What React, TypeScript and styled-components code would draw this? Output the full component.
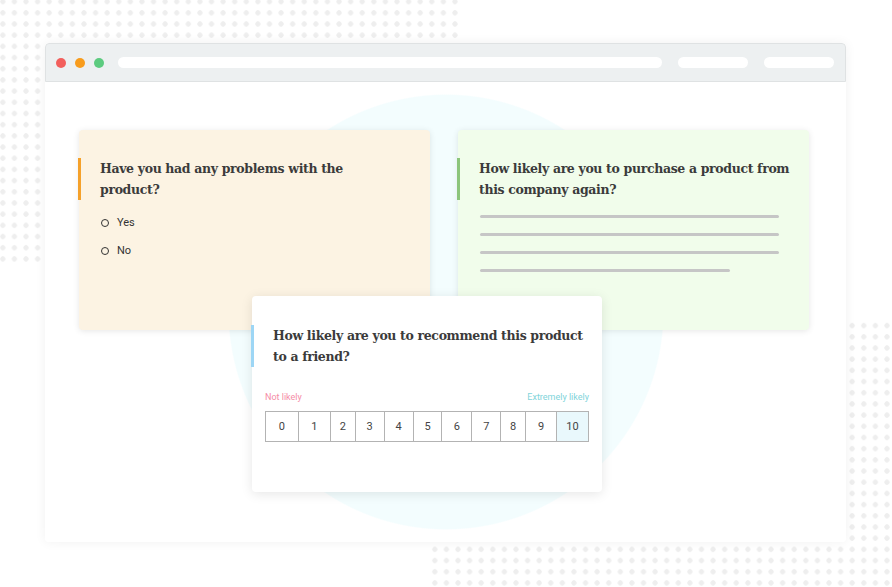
import styled, { createGlobalStyle } from "styled-components";

const GlobalStyle = createGlobalStyle`
    html, body {
        margin: 0;
        padding: 0;
        background: #ffffff;
    }
    body {
        font-family: Roboto, "Liberation Sans", sans-serif;
    }
`;

const dotField = `
    content: "";
    position: absolute;
    background-image: radial-gradient(circle, #eeeeee 2.3px, transparent 2.9px);
    background-size: 11.6px 11.2px;
`;

const Page = styled.div`
    position: relative;
    width: 892px;
    height: 587px;
    overflow: hidden;
    box-sizing: border-box;
    padding: 43px 0 0 45px;
    &::before {
        ${dotField}
        left: 0;
        top: 0;
        width: 460px;
        height: 264px;
        background-position: -3px -4px;
    }
    &::after {
        ${dotField}
        left: 430px;
        top: 320px;
        right: 0;
        bottom: 0;
        background-position: -1px 0;
    }
`;

const Window = styled.div`
    position: relative;
    z-index: 1;
    width: 801px;
    height: 499px;
    background: #ffffff;
    border-radius: 4px;
    box-shadow: 0 0 12px rgba(0, 0, 0, 0.06);
    display: flex;
    flex-direction: column;
    overflow: hidden;
`;

const TitleBar = styled.div`
    flex: none;
    height: 39px;
    box-sizing: border-box;
    background: #edf0f1;
    border: 1px solid #dfe2e3;
    border-radius: 4px 4px 0 0;
    display: flex;
    align-items: center;
    padding: 0 11px 0 10px;
`;

const Light = styled.span<{ $color: string }>`
    width: 10px;
    height: 10px;
    border-radius: 50%;
    background: ${(p) => p.$color};
    margin-right: 9px;
`;

const Pill = styled.span<{ $w: number; $gap: number }>`
    width: ${(p) => p.$w}px;
    height: 11px;
    border-radius: 6px;
    background: #ffffff;
    margin-left: ${(p) => p.$gap}px;
`;

const Content = styled.div`
    flex: 1;
    box-sizing: border-box;
    padding: 48px 0 0 34px;
    background: radial-gradient(
        circle 218px at 401px 230px,
        #f3fdfe 99.4%,
        #ffffff 100%
    );
    display: grid;
    grid-template-columns: 173px 178px 28px 144px 207px;
    grid-template-rows: 166px 34px 162px;
`;

const Card = styled.div<{ $bg: string; $col: string; $row: string }>`
    grid-column: ${(p) => p.$col};
    grid-row: ${(p) => p.$row};
    background: ${(p) => p.$bg};
    border-radius: 4px;
    box-shadow: 0 1px 6px rgba(0, 0, 0, 0.1);
    padding: 28px 22px 0 0;
    display: flex;
    flex-direction: column;
`;

const FrontCard = styled(Card)`
    position: relative;
    z-index: 2;
    padding: 29px 13px 0 0;
    box-shadow: 0 2px 12px rgba(0, 0, 0, 0.1);
`;

const Question = styled.h3<{ $accent: string }>`
    margin: 0 0 0 -1px;
    border-left: 3px solid ${(p) => p.$accent};
    padding-left: 19px;
    font-family: "Roboto Slab", "DejaVu Serif", serif;
    font-weight: 700;
    font-size: 12.5px;
    letter-spacing: -0.35px;
    line-height: 21px;
    white-space: nowrap;
    color: #3b3b3b;
`;

const Options = styled.div`
    margin-top: 8px;
    padding-left: 22px;
    display: flex;
    flex-direction: column;
`;

const Option = styled.label`
    height: 28px;
    display: flex;
    align-items: center;
    font-size: 11px;
    color: #333333;
`;

const Radio = styled.span`
    width: 6px;
    height: 6px;
    border: 1.3px solid #333333;
    border-radius: 50%;
    margin-right: 8px;
    margin-top: 2px;
`;

const Lines = styled.div`
    margin-top: 15px;
    padding-left: 22px;
    display: flex;
    flex-direction: column;
    gap: 15px;
`;

const Line = styled.div<{ $w: number }>`
    width: ${(p) => p.$w}px;
    height: 3px;
    border-radius: 2px;
    background: #c6c6c6;
`;

const Labels = styled.div`
    margin: 24px 0 0 13px;
    display: flex;
    justify-content: space-between;
    font-size: 9px;
    line-height: 12px;
`;

const Label = styled.span<{ $color: string }>`
    color: ${(p) => p.$color};
`;

const Scale = styled.div`
    margin: 8px 0 0 13px;
    display: flex;
    border: 1px solid #b3b3b3;
    height: 31px;
    box-sizing: border-box;
`;

const Cell = styled.div<{ $w: number; $active?: boolean }>`
    width: ${(p) => p.$w}px;
    box-sizing: border-box;
    border-left: 1px solid #b3b3b3;
    background: ${(p) => (p.$active ? "#e9f8fc" : "#ffffff")};
    display: flex;
    align-items: center;
    justify-content: center;
    font-size: 11px;
    color: #444444;
    &:first-child {
        border-left: none;
    }
`;

const cellWidths = [32, 32, 25, 29, 29, 29, 30, 29, 25, 31, 32];

const App = () => {
    return (
        <>
            <GlobalStyle />
            <Page>
                <Window>
                    <TitleBar>
                        <Light $color="#f25f5c" />
                        <Light $color="#f89c1c" />
                        <Light $color="#5ccb7f" />
                        <Pill $w={544} $gap={5} />
                        <Pill $w={70} $gap={16} />
                        <Pill $w={70} $gap={16} />
                    </TitleBar>
                    <Content>
                        <Card $bg="#fcf3e3" $col="1 / 3" $row="1 / 3">
                            <Question $accent="#f5a12a">
                                Have you had any problems with the
                                <br />
                                product?
                            </Question>
                            <Options>
                                <Option>
                                    <Radio />
                                    Yes
                                </Option>
                                <Option>
                                    <Radio />
                                    No
                                </Option>
                            </Options>
                        </Card>
                        <Card $bg="#f1fdeb" $col="4 / 6" $row="1 / 3">
                            <Question $accent="#8cc57b">
                                How likely are you to purchase a product from
                                <br />
                                this company again?
                            </Question>
                            <Lines>
                                <Line $w={299} />
                                <Line $w={299} />
                                <Line $w={299} />
                                <Line $w={250} />
                            </Lines>
                        </Card>
                        <FrontCard $bg="#ffffff" $col="2 / 5" $row="2 / 4">
                            <Question $accent="#9dd6f5">
                                How likely are you to recommend this product
                                <br />
                                to a friend?
                            </Question>
                            <Labels>
                                <Label $color="#f58ca6">Not likely</Label>
                                <Label $color="#7fd4da">Extremely likely</Label>
                            </Labels>
                            <Scale>
                                {cellWidths.map((w, i) => (
                                    <Cell key={i} $w={w} $active={i === 10}>
                                        {i}
                                    </Cell>
                                ))}
                            </Scale>
                        </FrontCard>
                    </Content>
                </Window>
            </Page>
        </>
    );
};

export default App;
